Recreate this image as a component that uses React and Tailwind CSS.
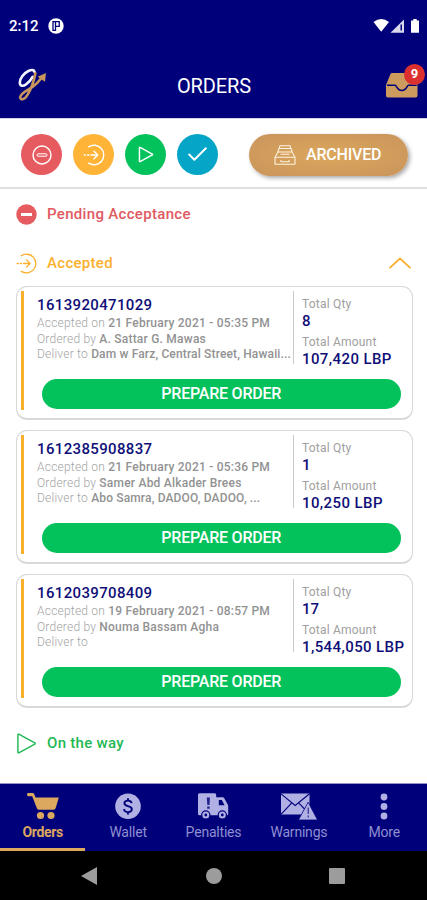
import { Check } from "lucide-react";

const orders = [
  {
    id: "1613920471029",
    accepted: "21 February 2021 - 05:35 PM",
    customer: "A. Sattar G. Mawas",
    address: "Dam w Farz, Central Street, Hawaii...",
    qty: "8",
    amount: "107,420 LBP",
  },
  {
    id: "1612385908837",
    accepted: "21 February 2021 - 05:36 PM",
    customer: "Samer Abd Alkader Brees",
    address: "Abo Samra, DADOO, DADOO, ...",
    qty: "1",
    amount: "10,250 LBP",
  },
  {
    id: "1612039708409",
    accepted: "19 February 2021 - 08:57 PM",
    customer: "Nouma Bassam Agha",
    address: "",
    qty: "17",
    amount: "1,544,050 LBP",
  },
];

function EnterIcon({ className }) {
  return (
    <svg viewBox="0 0 22 22" className={className} fill="none" stroke="currentColor" strokeWidth="1.4" strokeLinecap="round" strokeLinejoin="round">
      <path d="M5.600 2.800A9.800 9.800 0 1 1 5.600 19.200" />
      <path d="M1.200 11h1.200M4.600 11h1.200M8 11h6.600M11 7.200l3.800 3.800-3.800 3.800" />
    </svg>
  );
}

function PlayIcon({ className }) {
  return (
    <svg viewBox="0 0 22 22" className={className} fill="none" stroke="currentColor" strokeWidth="1.5" strokeLinejoin="round">
      <path d="M2 1.800v18.400q0 .9.900.5L19.700 11.600q.8-.6 0-1.200L2.900 1.300Q2 .9 2 1.800z" />
    </svg>
  );
}

function LogoIcon() {
  return (
    <svg viewBox="0 0 30 36" className="h-9 w-[30px]" fill="none" strokeLinecap="round" strokeLinejoin="round">
      <path d="M17.600 6.200C17.400 3.800 14.800 3.400 11.400 5C6.400 7.400 2.800 12.600 2.800 16.600C2.800 20.400 6 20.600 9.200 18.200C11.800 16.200 14.200 13.400 15.600 10.800" stroke="#f4f4ff" strokeWidth="2.600" />
      <path d="M18.400 7.200C17 14.400 14 23.400 10.200 29.400C7.600 34 3.200 34.400 3.200 31.200C3.400 27.200 10.200 24.400 15.600 20.800C19.400 18.200 21.800 15.600 24 12.600" stroke="#c8965c" strokeWidth="2.600" />
      <path d="M20.600 10.800L29 7l-1 8.800z" fill="#c8965c" />
    </svg>
  );
}

function InboxIcon() {
  return (
    <svg viewBox="0 0 32 25" className="h-[25px] w-8">
      <path d="M6.200 0h19.600q1.200 0 1.700 1.100L31.500 12v10.600q0 1.900-1.900 1.900H1.900Q0 24.500 0 22.600V12L4.500 1.100Q5 0 6.200 0z" fill="#cc9b5d" />
      <path d="M1 12.200h8.300c1.300 0 1.500 5.200 6.500 5.200s5.300-5.200 6.600-5.200h8.300" fill="none" stroke="#00007b" strokeWidth="1.500" />
    </svg>
  );
}

function ArchiveIcon() {
  return (
    <svg viewBox="0 0 22 20" className="h-5 w-[22px]" fill="none" stroke="#fff3df" strokeWidth="1.100" strokeLinejoin="round">
      <path d="M6 .7h10l.8 2.800H5.200zM4.900 3.500h12.200l1 3.500H3.900zM4 7h14l3 5.200v6.500q0 .6-.6.600H1.600q-.6 0-.6-.6v-6.500z" />
      <path d="M1.200 12.300h19.600M7 15v1.800h8V15M6.500 9.300h9" />
    </svg>
  );
}

function CartIcon() {
  return (
    <svg viewBox="0 0 32 27" className="h-[27px] w-8" fill="#dca75f">
      <path d="M1 0h4.500q1.300 0 1.800 1.300L8.500 4.500h23.300L28.700 15q-.5 1.800-2.300 1.800H12.200q-1.700 0-2.300-1.600L5.200 3.200H1Q0 3 0 1.600T1 0z" />
      <circle cx="13.500" cy="22.500" r="3.600" />
      <circle cx="24" cy="22.500" r="3.600" />
    </svg>
  );
}

function WalletIcon() {
  return (
    <svg viewBox="0 0 26 27" className="h-[27px] w-[26px]">
      <circle cx="13" cy="13.300" r="12.800" fill="#b0b0e4" />
      <path d="M16.600 10.100C16.200 8.300 14.900 7.600 13 7.600c-2.200 0-3.600 1-3.600 2.700 0 3.900 7.400 1.800 7.400 5.800 0 1.900-1.600 3-3.800 3-2.300 0-3.700-1-4-3M13 5.200v2.400M13 19.100v2.400" fill="none" stroke="#00007b" strokeWidth="1.900" />
    </svg>
  );
}

function TruckIcon() {
  return (
    <svg viewBox="0 0 31 27" className="h-[27px] w-[31px]">
      <path d="M1.500.3h15.200q1.500 0 1.500 1.500v2.500h6.200q1.300 0 2 1.200l3.200 5.700q.6 1 .6 2v7.500q0 1.500-1.500 1.500H1.500Q0 22.200 0 20.700V1.800Q0 .3 1.500.3z" fill="#b0b0e4" />
      <path d="M20.800 7h3l2.800 5.300h-5.800z" fill="#00007b" />
      <path d="M8.800 4.500h3.200l-.5 7.600H9.300zM9.200 13.500h2.500v2.300H9.200z" fill="#00007b" opacity=".8" />
      <g fill="#b0b0e4" stroke="#00007b" strokeWidth="1.200">
        <circle cx="7.800" cy="22" r="4.100" />
        <circle cx="24.300" cy="22" r="4.100" />
      </g>
      <circle cx="7.800" cy="22" r="1.400" fill="#00007b" />
      <circle cx="24.300" cy="22" r="1.400" fill="#00007b" />
    </svg>
  );
}

function WarningsIcon() {
  return (
    <svg viewBox="0 0 36 27" className="h-[27px] w-9">
      <path d="M0 .5h28.500v21H0z" fill="#b0b0e4" />
      <path d="M0 .8l14.200 11.700L28.500.8M0 21.300L10.800 9.800M28.500 21L17.600 9.800" fill="none" stroke="#00007b" strokeWidth="1.100" />
      <path d="M27.200 9.200L36.600 27H17.400z" fill="#b0b0e4" stroke="#00007b" strokeWidth=".8" />
      <path d="M27.200 14.500v6.500M27.200 22.500v2" stroke="#00007b" strokeWidth="1.100" opacity=".8" />
    </svg>
  );
}

function MoreIcon() {
  return (
    <svg viewBox="0 0 8 27" className="h-[27px] w-2" fill="#b0b0e4">
      <circle cx="4" cy="4" r="3.400" />
      <circle cx="4" cy="13.500" r="3.400" />
      <circle cx="4" cy="23" r="3.400" />
    </svg>
  );
}

const tabs = [
  { label: "Orders", icon: CartIcon, active: true },
  { label: "Wallet", icon: WalletIcon },
  { label: "Penalties", icon: TruckIcon },
  { label: "Warnings", icon: WarningsIcon },
  { label: "More", icon: MoreIcon },
];

function OrderCard({ order }) {
  return (
    <article className="flex h-[133.500px] rounded-[11px] border border-b-2 border-[#d9d9d9] bg-white pt-1 pl-[4.500px]">
      <div className="h-[119px] w-[3px] bg-[#fbb02d]" />
      <div className="min-w-0 flex-1">
        <div className="flex h-[73px]">
          <div className="w-[269px] shrink-0 pt-[5px] pl-[13px] text-[12px] leading-[15.500px] tracking-[0.220px] whitespace-nowrap text-[#a4a4a4]">
            <h3 className="mb-[2px] text-[15px] leading-[18px] font-medium tracking-[0.350px] text-[#100f78]">
              {order.id}
            </h3>
            <p className="font-light">
              Accepted on <span className="font-medium text-[#929292]">{order.accepted}</span>
            </p>
            <p className="font-light">
              Ordered by <span className="font-medium text-[#929292]">{order.customer}</span>
            </p>
            <p className="font-light">
              Deliver to <span className="font-medium tracking-[0.150px] text-[#929292]">{order.address}</span>
            </p>
          </div>
          <dl className="border-l border-[#c9c9c9] pt-[5px] pl-2 whitespace-nowrap">
            <dt className="text-[12px] leading-4 tracking-[0.200px] text-[#a0a0a0]">Total Qty</dt>
            <dd className="mb-1 text-[15px] leading-[18px] font-medium text-[#100f78]">{order.qty}</dd>
            <dt className="text-[12px] leading-4 tracking-[0.200px] text-[#a0a0a0]">Total Amount</dt>
            <dd className="text-[15px] leading-[18px] font-medium tracking-[0.400px] text-[#100f78]">{order.amount}</dd>
          </dl>
        </div>
        <button className="mt-[15px] ml-[17.500px] block h-[30px] w-[359.500px] rounded-full bg-[#04c25b] text-[16px] font-medium tracking-[-0.220px] text-white">
          PREPARE ORDER
        </button>
      </div>
    </article>
  );
}

export default function App() {
  return (
    <div className="flex h-[900px] w-[427px] flex-col overflow-hidden bg-white font-['Roboto',sans-serif]">
      <header className="h-[118px] shrink-0 bg-[#00007b] text-white">
        <div className="flex h-[52px] items-center pl-[9px]">
          <span className="w-[39px] pt-px text-[15px] font-medium">2:12</span>
          <svg viewBox="0 0 16 16" className="h-4 w-4">
            <circle cx="8" cy="8" r="7.700" fill="#fff" />
            <path d="M5 12.300V3.700h2.500v8.600zM7.500 3.700h3.700v4.600H7.500" fill="none" stroke="#00007b" strokeWidth="1.300" />
          </svg>
          <svg viewBox="0 0 48 16" className="ml-auto h-4 w-12" fill="#fff">
            <path d="M.5 4Q8.200-1.800 16 4L8.200 13.800z" />
            <path d="M31 1.500V14.800H17.500z" opacity=".85" />
            <path d="M27.500 6.500v6h1.500v-6z" fill="#00007b" />
            <path d="M40.300 1h3.400v1.500h2.300v12.300h-8V2.500h2.300z" />
          </svg>
          <div className="w-[6px]" />
        </div>
        <div className="grid h-[66px] grid-cols-3 items-center">
          <div className="-mt-0.5 pl-[17px]">
            <LogoIcon />
          </div>
          <h1 className="pt-0.5 pl-px text-center text-[20px] tracking-[-0.100px]">ORDERS</h1>
          <div className="relative justify-self-end pr-[9px]">
            <InboxIcon />
            <span className="absolute -top-[9px] right-[2px] flex h-[21px] w-[21px] items-center justify-center rounded-full bg-[#db302f] text-[13px] font-bold">
              9
            </span>
          </div>
        </div>
      </header>

      <div className="flex h-[71px] shrink-0 items-center gap-[11px] border-t border-b-2 border-t-[#d3d3e8] border-b-[#dedee0] pt-[3px] pl-[21px]">
        <button className="flex h-[41px] w-[41px] items-center justify-center rounded-full bg-[#e65b60] text-white">
          <svg viewBox="0 0 20 20" className="h-5 w-5" fill="none" stroke="currentColor" strokeWidth="1.400">
            <circle cx="10" cy="10" r="9" />
            <rect x="5" y="8.800" width="10" height="2.400" rx="1" strokeWidth="1" />
          </svg>
        </button>
        <button className="flex h-[41px] w-[41px] items-center justify-center rounded-full bg-[#ffb438] text-white">
          <EnterIcon className="h-[22px] w-[22px]" />
        </button>
        <button className="flex h-[41px] w-[41px] items-center justify-center rounded-full bg-[#04c25b] text-white">
          <PlayIcon className="h-[17px] w-4 stroke-2" />
        </button>
        <button className="flex h-[41px] w-[41px] items-center justify-center rounded-full bg-[#04a5c7] text-white">
          <Check size={25} strokeWidth={1.9} />
        </button>
        <button className="ml-[20px] flex h-[42px] w-[159px] items-center gap-[10px] rounded-full bg-[radial-gradient(ellipse_at_center,#dca75c,#c8945c)] pl-[25px] text-[16px] font-medium tracking-[-0.200px] text-white shadow-[2px_2px_4px_rgba(0,0,0,0.350)]">
          <ArchiveIcon />
          <span className="pt-px">ARCHIVED</span>
        </button>
      </div>

      <main className="min-h-0 flex-1 pr-[14px] pl-[15.500px]">
        <h2 className="flex h-[50px] items-center gap-[10.500px] pt-px text-[15px] font-medium tracking-[0.320px] text-[#e05a61]">
          <svg viewBox="0 0 21 21" className="h-[21px] w-[21px]">
            <circle cx="10.500" cy="10.500" r="10.200" fill="#e65b60" />
            <rect x="5" y="9" width="11" height="3" fill="#fff" />
          </svg>
          Pending Acceptance
        </h2>
        <h2 className="flex h-[47px] items-center gap-[10.500px] pt-px text-[15px] font-medium tracking-[0.300px] text-[#fbb02d]">
          <EnterIcon className="h-[21px] w-[21px]" />
          Accepted
          <svg viewBox="0 0 22 12" className="mr-0.5 ml-auto h-3 w-[22px]" fill="none" stroke="currentColor" strokeWidth="1.700" strokeLinecap="round" strokeLinejoin="round">
            <path d="M1 10.700L11 1.500l10 9.200" />
          </svg>
        </h2>
        <div className="flex flex-col gap-[10.500px]">
          {orders.map((order) => (
            <OrderCard key={order.id} order={order} />
          ))}
        </div>
        <h2 className="flex h-[72px] items-center gap-[10.500px] text-[15px] font-medium tracking-[0.300px] text-[#1fb854]">
          <PlayIcon className="h-[21px] w-[21px]" />
          On the way
        </h2>
      </main>

      <nav className="grid h-[68px] shrink-0 grid-cols-5 border-t border-[#9292c9] bg-[#00007b]">
        {tabs.map(({ label, icon: Icon, active }) => (
          <button
            key={label}
            className={
              active
                ? "flex flex-col items-center border-b-[3px] border-[#dca75f] pt-[9px] text-[14px] leading-[24px] font-bold tracking-[-0.300px] text-[#dca75f]"
                : "flex flex-col items-center pt-[9px] text-[14px] leading-[24px] tracking-[-0.200px] text-[#8e8ed0]"
            }
          >
            <Icon />
            {label}
          </button>
        ))}
      </nav>

      <div className="flex h-[49px] shrink-0 items-center justify-between bg-black pr-[82px] pl-[81px]">
        <svg viewBox="0 0 17 18" className="h-[18px] w-[17px]" fill="#9c9c9c">
          <path d="M16 0v18L0 9z" />
        </svg>
        <div className="h-4 w-4 rounded-full bg-[#9c9c9c]" />
        <div className="h-4 w-4 rounded-[1px] bg-[#9c9c9c]" />
      </div>
    </div>
  );
}
